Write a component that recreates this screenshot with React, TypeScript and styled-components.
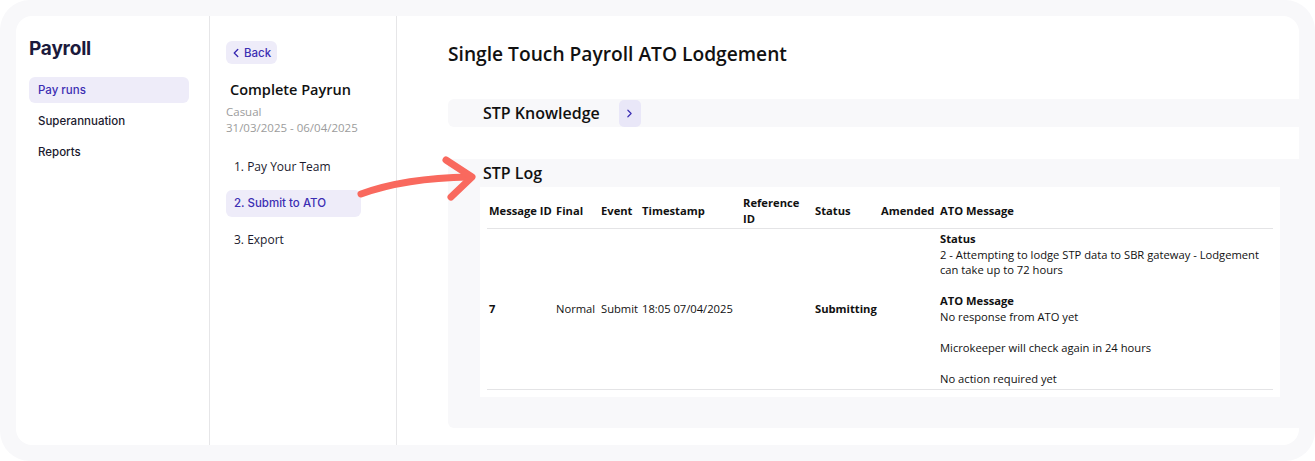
import React from 'react'
import styled, { createGlobalStyle } from 'styled-components'
import { ChevronLeft, ChevronRight } from 'lucide-react'

const GlobalStyle = createGlobalStyle`
  * { box-sizing: border-box; }
  body {
    margin: 0;
    background: #fff;
    font-family: 'Open Sans', 'Noto Sans', sans-serif;
    color: #111;
  }
`

const purple = '#3c2eb3'
const lilac = '#eeecf9'
const panelGray = '#f8f8fa'

const Frame = styled.div`
  position: relative;
  width: 1315px;
  height: 461px;
  background: ${panelGray};
  border-radius: 30px;
  padding: 16px;
`

const Card = styled.div`
  display: flex;
  height: 100%;
  background: #fff;
  border-radius: 16px;
  overflow: hidden;
`

const Sidebar = styled.nav`
  width: 194px;
  flex-shrink: 0;
  border-right: 1px solid #e6e6e8;
  padding: 21px 20px 0 13px;
  font-family: Inter, 'Noto Sans', sans-serif;
`

const AppTitle = styled.h1`
  margin: 0;
  font-size: 19px;
  line-height: 24px;
  font-weight: 700;
  color: #1b1a3c;
  letter-spacing: -0.2px;
`

const NavList = styled.div`
  display: flex;
  flex-direction: column;
  gap: 5px;
  margin-top: 16px;
`

const NavItem = styled.div<{ $active?: boolean }>`
  height: 26px;
  display: flex;
  align-items: center;
  padding-left: 9px;
  border-radius: 6px;
  font-size: 11.5px;
  font-weight: 500;
  color: ${(p) => (p.$active ? purple : '#1b1a2e')};
  background: ${(p) => (p.$active ? lilac : 'transparent')};
`

const Steps = styled.div`
  width: 187px;
  flex-shrink: 0;
  border-right: 1px solid #e6e6e8;
  padding: 25px 18px 0 16px;
`

const BackButton = styled.button`
  display: flex;
  align-items: center;
  gap: 1px;
  height: 23px;
  padding: 0 6px 0 3px;
  border: none;
  border-radius: 6px;
  background: ${lilac};
  color: ${purple};
  font-family: Inter, 'Noto Sans', sans-serif;
  font-size: 11.5px;
  font-weight: 500;
`

const RunTitle = styled.h2`
  margin: 16px 0 0 4px;
  font-size: 14.5px;
  line-height: 20px;
  font-weight: 600;
  color: #111;
`

const Meta = styled.div`
  margin-top: 4px;
  font-size: 11.5px;
  line-height: 16px;
  color: #9c9c9c;
`

const StepList = styled.div`
  display: flex;
  flex-direction: column;
  gap: 9.5px;
  margin-top: 17px;
`

const StepItem = styled.div<{ $active?: boolean }>`
  width: 135px;
  height: 27px;
  display: flex;
  align-items: center;
  padding-left: 8px;
  border-radius: 6px;
  font-family: ${(p) => (p.$active ? "Inter, 'Noto Sans', sans-serif" : "'Open Sans', sans-serif")};
  font-size: ${(p) => (p.$active ? '11.5px' : '12px')};
  font-weight: 500;
  color: ${(p) => (p.$active ? purple : '#1b1a2e')};
  background: ${(p) => (p.$active ? lilac : 'transparent')};
`

const Main = styled.main`
  flex: 1;
  padding: 25px 0 0 51px;
  min-width: 0;
`

const PageTitle = styled.h2`
  margin: 0;
  font-size: 19.2px;
  line-height: 26px;
  font-weight: 600;
  color: #111;
`

const KnowledgeBar = styled.div`
  display: flex;
  align-items: center;
  gap: 19px;
  height: 28px;
  margin-top: 32px;
  padding-left: 35px;
  background: ${panelGray};
  border-radius: 6px 0 0 6px;
`

const SectionTitle = styled.h3`
  margin: 0;
  font-size: 16px;
  line-height: 22px;
  font-weight: 600;
  color: #111;
`

const IconButton = styled.button`
  width: 22px;
  height: 27px;
  padding: 0;
  display: flex;
  align-items: center;
  justify-content: center;
  border: none;
  border-radius: 5px;
  background: #e9e7f8;
  color: ${purple};
`

const LogPanel = styled.section`
  margin-top: 32px;
  background: ${panelGray};
  border-radius: 6px 0 0 6px;
  padding: 3px 19px 31px 32px;
`

const LogHeading = styled(SectionTitle)`
  padding-left: 3px;
  height: 25px;
  line-height: 22px;
`

const TableBox = styled.div`
  background: #fff;
  padding: 8px 7px 7px 7px;
`

const Table = styled.table`
  width: 100%;
  border-collapse: collapse;
  table-layout: fixed;
  font-size: 11.2px;
  line-height: 15.5px;
  color: #111;
`

const Th = styled.th<{ $w?: number }>`
  width: ${(p) => (p.$w ? `${p.$w}px` : 'auto')};
  text-align: left;
  font-weight: 700;
  vertical-align: middle;
  padding: 0 0 1px 2px;
  line-height: 16px;
  border-bottom: 1px solid #e4e4e6;
`

const Td = styled.td<{ $bold?: boolean }>`
  padding: 2px 0 2px 2px;
  vertical-align: middle;
  font-weight: ${(p) => (p.$bold ? 700 : 400)};
  border-bottom: 1px solid #e4e4e6;
  white-space: nowrap;
`

const MessageCell = styled.td`
  padding: 2px 4px 3px 2px;
  vertical-align: middle;
  border-bottom: 1px solid #e4e4e6;
`

const MsgLine = styled.div<{ $gap?: boolean; $bold?: boolean }>`
  margin-top: ${(p) => (p.$gap ? '15.5px' : '0')};
  font-weight: ${(p) => (p.$bold ? 700 : 400)};
`

const Arrow = styled.svg`
  position: absolute;
  left: 340px;
  top: 140px;
  pointer-events: none;
`

const columns: [string, number][] = [
  ['Message ID', 67],
  ['Final', 45],
  ['Event', 41],
  ['Timestamp', 101],
  ['Reference ID', 72],
  ['Status', 66],
  ['Amended', 59],
  ['ATO Message', 0]
]

export default function App() {
  return (
    <>
      <GlobalStyle />
      <Frame>
        <Card>
          <Sidebar>
            <AppTitle>Payroll</AppTitle>
            <NavList>
              <NavItem $active>Pay runs</NavItem>
              <NavItem>Superannuation</NavItem>
              <NavItem>Reports</NavItem>
            </NavList>
          </Sidebar>

          <Steps>
            <BackButton>
              <ChevronLeft size={14} strokeWidth={2.4} />
              Back
            </BackButton>
            <RunTitle>Complete Payrun</RunTitle>
            <Meta>
              Casual
              <br />
              31/03/2025 - 06/04/2025
            </Meta>
            <StepList>
              <StepItem>1. Pay Your Team</StepItem>
              <StepItem $active>2. Submit to ATO</StepItem>
              <StepItem>3. Export</StepItem>
            </StepList>
          </Steps>

          <Main>
            <PageTitle>Single Touch Payroll ATO Lodgement</PageTitle>
            <KnowledgeBar>
              <SectionTitle>STP Knowledge</SectionTitle>
              <IconButton>
                <ChevronRight size={13} strokeWidth={2.2} />
              </IconButton>
            </KnowledgeBar>

            <LogPanel>
              <LogHeading>STP Log</LogHeading>
              <TableBox>
                <Table>
                  <thead>
                    <tr>
                      {columns.map(([label, w]) => (
                        <Th key={label} $w={w || undefined}>
                          {label}
                        </Th>
                      ))}
                    </tr>
                  </thead>
                  <tbody>
                    <tr>
                      <Td $bold>7</Td>
                      <Td>Normal</Td>
                      <Td>Submit</Td>
                      <Td>18:05 07/04/2025</Td>
                      <Td></Td>
                      <Td $bold>Submitting</Td>
                      <Td></Td>
                      <MessageCell>
                        <MsgLine $bold>Status</MsgLine>
                        <MsgLine>
                          2 - Attempting to lodge STP data to SBR gateway - Lodgement can
                          take up to 72 hours
                        </MsgLine>
                        <MsgLine $gap $bold>
                          ATO Message
                        </MsgLine>
                        <MsgLine>No response from ATO yet</MsgLine>
                        <MsgLine $gap>Microkeeper will check again in 24 hours</MsgLine>
                        <MsgLine $gap>No action required yet</MsgLine>
                      </MessageCell>
                    </tr>
                  </tbody>
                </Table>
              </TableBox>
            </LogPanel>
          </Main>
        </Card>

        <Arrow width="150" height="80" viewBox="340 140 150 80">
          <g fill="none" stroke="#f9695e" strokeWidth="7" strokeLinecap="round" strokeLinejoin="round">
            <path d="M361 194 Q 405 178 469 177" />
            <path d="M446 160 L 472 177 L 451 197" />
          </g>
        </Arrow>
      </Frame>
    </>
  )
}
